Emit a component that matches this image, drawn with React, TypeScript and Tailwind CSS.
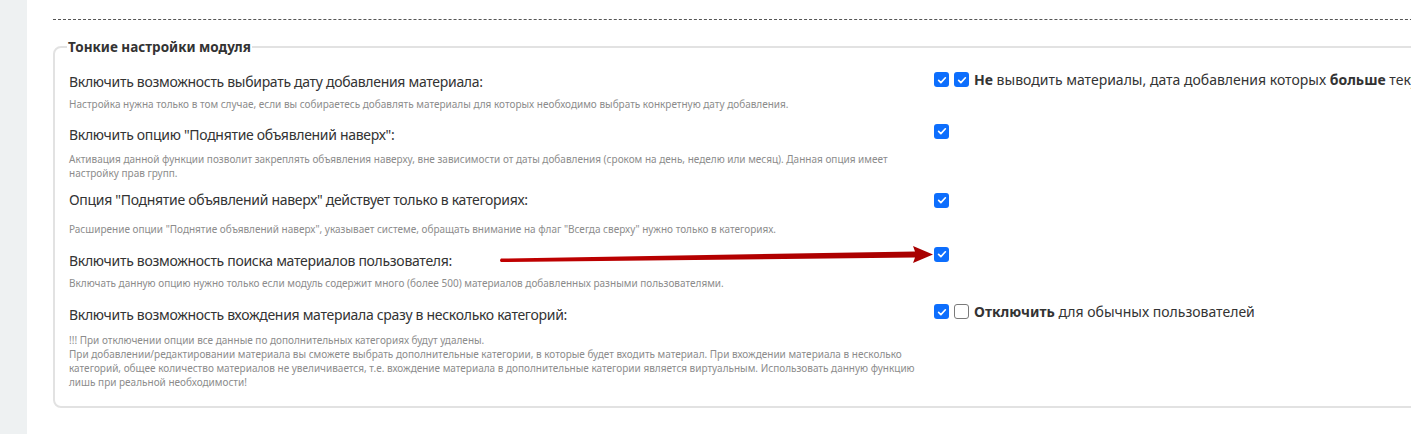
import React from "react";

const Check = ({ checked = true }: { checked?: boolean }) =>
  checked ? (
    <span className="inline-flex h-[15px] w-[15px] shrink-0 items-center justify-center rounded-[3px] bg-[#0d6efd]">
      <svg viewBox="0 0 16 16" className="h-[12px] w-[12px]">
        <path d="M3.5 8.5l3 3 6-6.5" fill="none" stroke="#fff" strokeWidth="2.2" strokeLinecap="round" strokeLinejoin="round" />
      </svg>
    </span>
  ) : (
    <span className="inline-block h-[15px] w-[15px] shrink-0 rounded-[3px] border border-[#7a7a7a] bg-white" />
  );

type Row = {
  label: string;
  desc: React.ReactNode;
  right: React.ReactNode;
  pt: string;
  descMt: string;
  cbMt: string;
};

const rows: Row[] = [
  {
    label: "Включить возможность выбирать дату добавления материала:",
    desc: "Настройка нужна только в том случае, если вы собираетесь добавлять материалы для которых необходимо выбрать конкретную дату добавления.",
    right: (
      <div className="flex items-center gap-[5px] whitespace-nowrap">
        <Check />
        <Check />
        <span className="text-[14px] text-[#333]">
          <b>Не</b> выводить материалы, дата добавления которых <b>больше</b> текущей даты
        </span>
      </div>
    ),
    pt: "pt-[15px]",
    descMt: "mt-[5px]",
    cbMt: "mt-[-3px]",
  },
  {
    label: 'Включить опцию "Поднятие объявлений наверх":',
    desc: "Активация данной функции позволит закреплять объявления наверху, вне зависимости от даты добавления (сроком на день, неделю или месяц). Данная опция имеет настройку прав групп.",
    right: <Check />,
    pt: "pt-[14px]",
    descMt: "mt-[7px]",
    cbMt: "mt-[-6px]",
  },
  {
    label: 'Опция "Поднятие объявлений наверх" действует только в категориях:',
    desc: 'Расширение опции "Поднятие объявлений наверх", указывает системе, обращать внимание на флаг "Всегда сверху" нужно только в категориях.',
    right: <Check />,
    pt: "pt-[10px]",
    descMt: "mt-[12px]",
    cbMt: "mt-[-2px]",
  },
  {
    label: "Включить возможность поиска материалов пользователя:",
    desc: "Включать данную опцию нужно только если модуль содержит много (более 500) материалов добавленных разными пользователями.",
    right: <Check />,
    pt: "pt-[15px]",
    descMt: "mt-[5px]",
    cbMt: "mt-[-9px]",
  },
  {
    label: "Включить возможность вхождения материала сразу в несколько категорий:",
    desc: (
      <>
        !!! При отключении опции все данные по дополнительных категориях будут удалены.
        <br />
        При добавлении/редактировании материала вы сможете выбрать дополнительные категории, в которые будет входить материал. При вхождении материала в несколько категорий, общее количество материалов не увеличивается, т.е. вхождение материала в дополнительные категории является виртуальным. Использовать данную функцию лишь при реальной необходимости!
      </>
    ),
    right: (
      <div className="flex items-center gap-[5px] whitespace-nowrap">
        <Check />
        <Check checked={false} />
        <span className="text-[14px] text-[#333]">
          <b>Отключить</b> для обычных пользователей
        </span>
      </div>
    ),
    pt: "pt-[15px]",
    descMt: "mt-[8px]",
    cbMt: "mt-[-4px]",
  },
];

export default function App() {
  return (
    <div className="flex h-[434px] w-[1411px] overflow-hidden bg-white" style={{ fontFamily: '"Noto Sans", "Liberation Sans", sans-serif' }}>
      <div className="h-full w-[27px] shrink-0 bg-[#eef1f2]" />
      <div className="relative flex-1 overflow-hidden pl-[26px]">
        <div className="mt-[19px] w-[1400px] border-t border-dashed border-[#555]" />
        <fieldset className="mt-[17px] w-[1400px] rounded-[8px] border-2 border-[#e2e2e2] pb-[17px] pl-[14px]">
          <legend className="-ml-[2px] px-[1px] text-[13.5px] font-bold leading-[20px] text-[#333]">
            Тонкие настройки модуля
          </legend>
          {rows.map((r, i) => (
            <div key={i} className={`flex ${r.pt}`}>
              <div className="w-[865px] shrink-0">
                <div className="text-[14px] leading-[20px] tracking-[-0.3px] text-[#333]">{r.label}</div>
                <div className={`${r.descMt} w-[856px] text-[10px] leading-[14px] text-[#8c8c8c]`}>{r.desc}</div>
              </div>
              <div className={r.cbMt}>{r.right}</div>
            </div>
          ))}
        </fieldset>
        <svg className="pointer-events-none absolute left-0 top-0" width="1384" height="434" viewBox="0 0 1384 434">
          <defs>
            <linearGradient id="ag" x1="0" x2="1" y1="0" y2="0">
              <stop offset="0" stopColor="#c00000" />
              <stop offset="1" stopColor="#a80000" />
            </linearGradient>
          </defs>
          <path
            d="M474 258.5 Q472 260.5 474 262 L888 257.5 L886 263 L906 254.5 L886 246 L888 251.5 Z"
            fill="url(#ag)"
          />
        </svg>
      </div>
    </div>
  );
}
